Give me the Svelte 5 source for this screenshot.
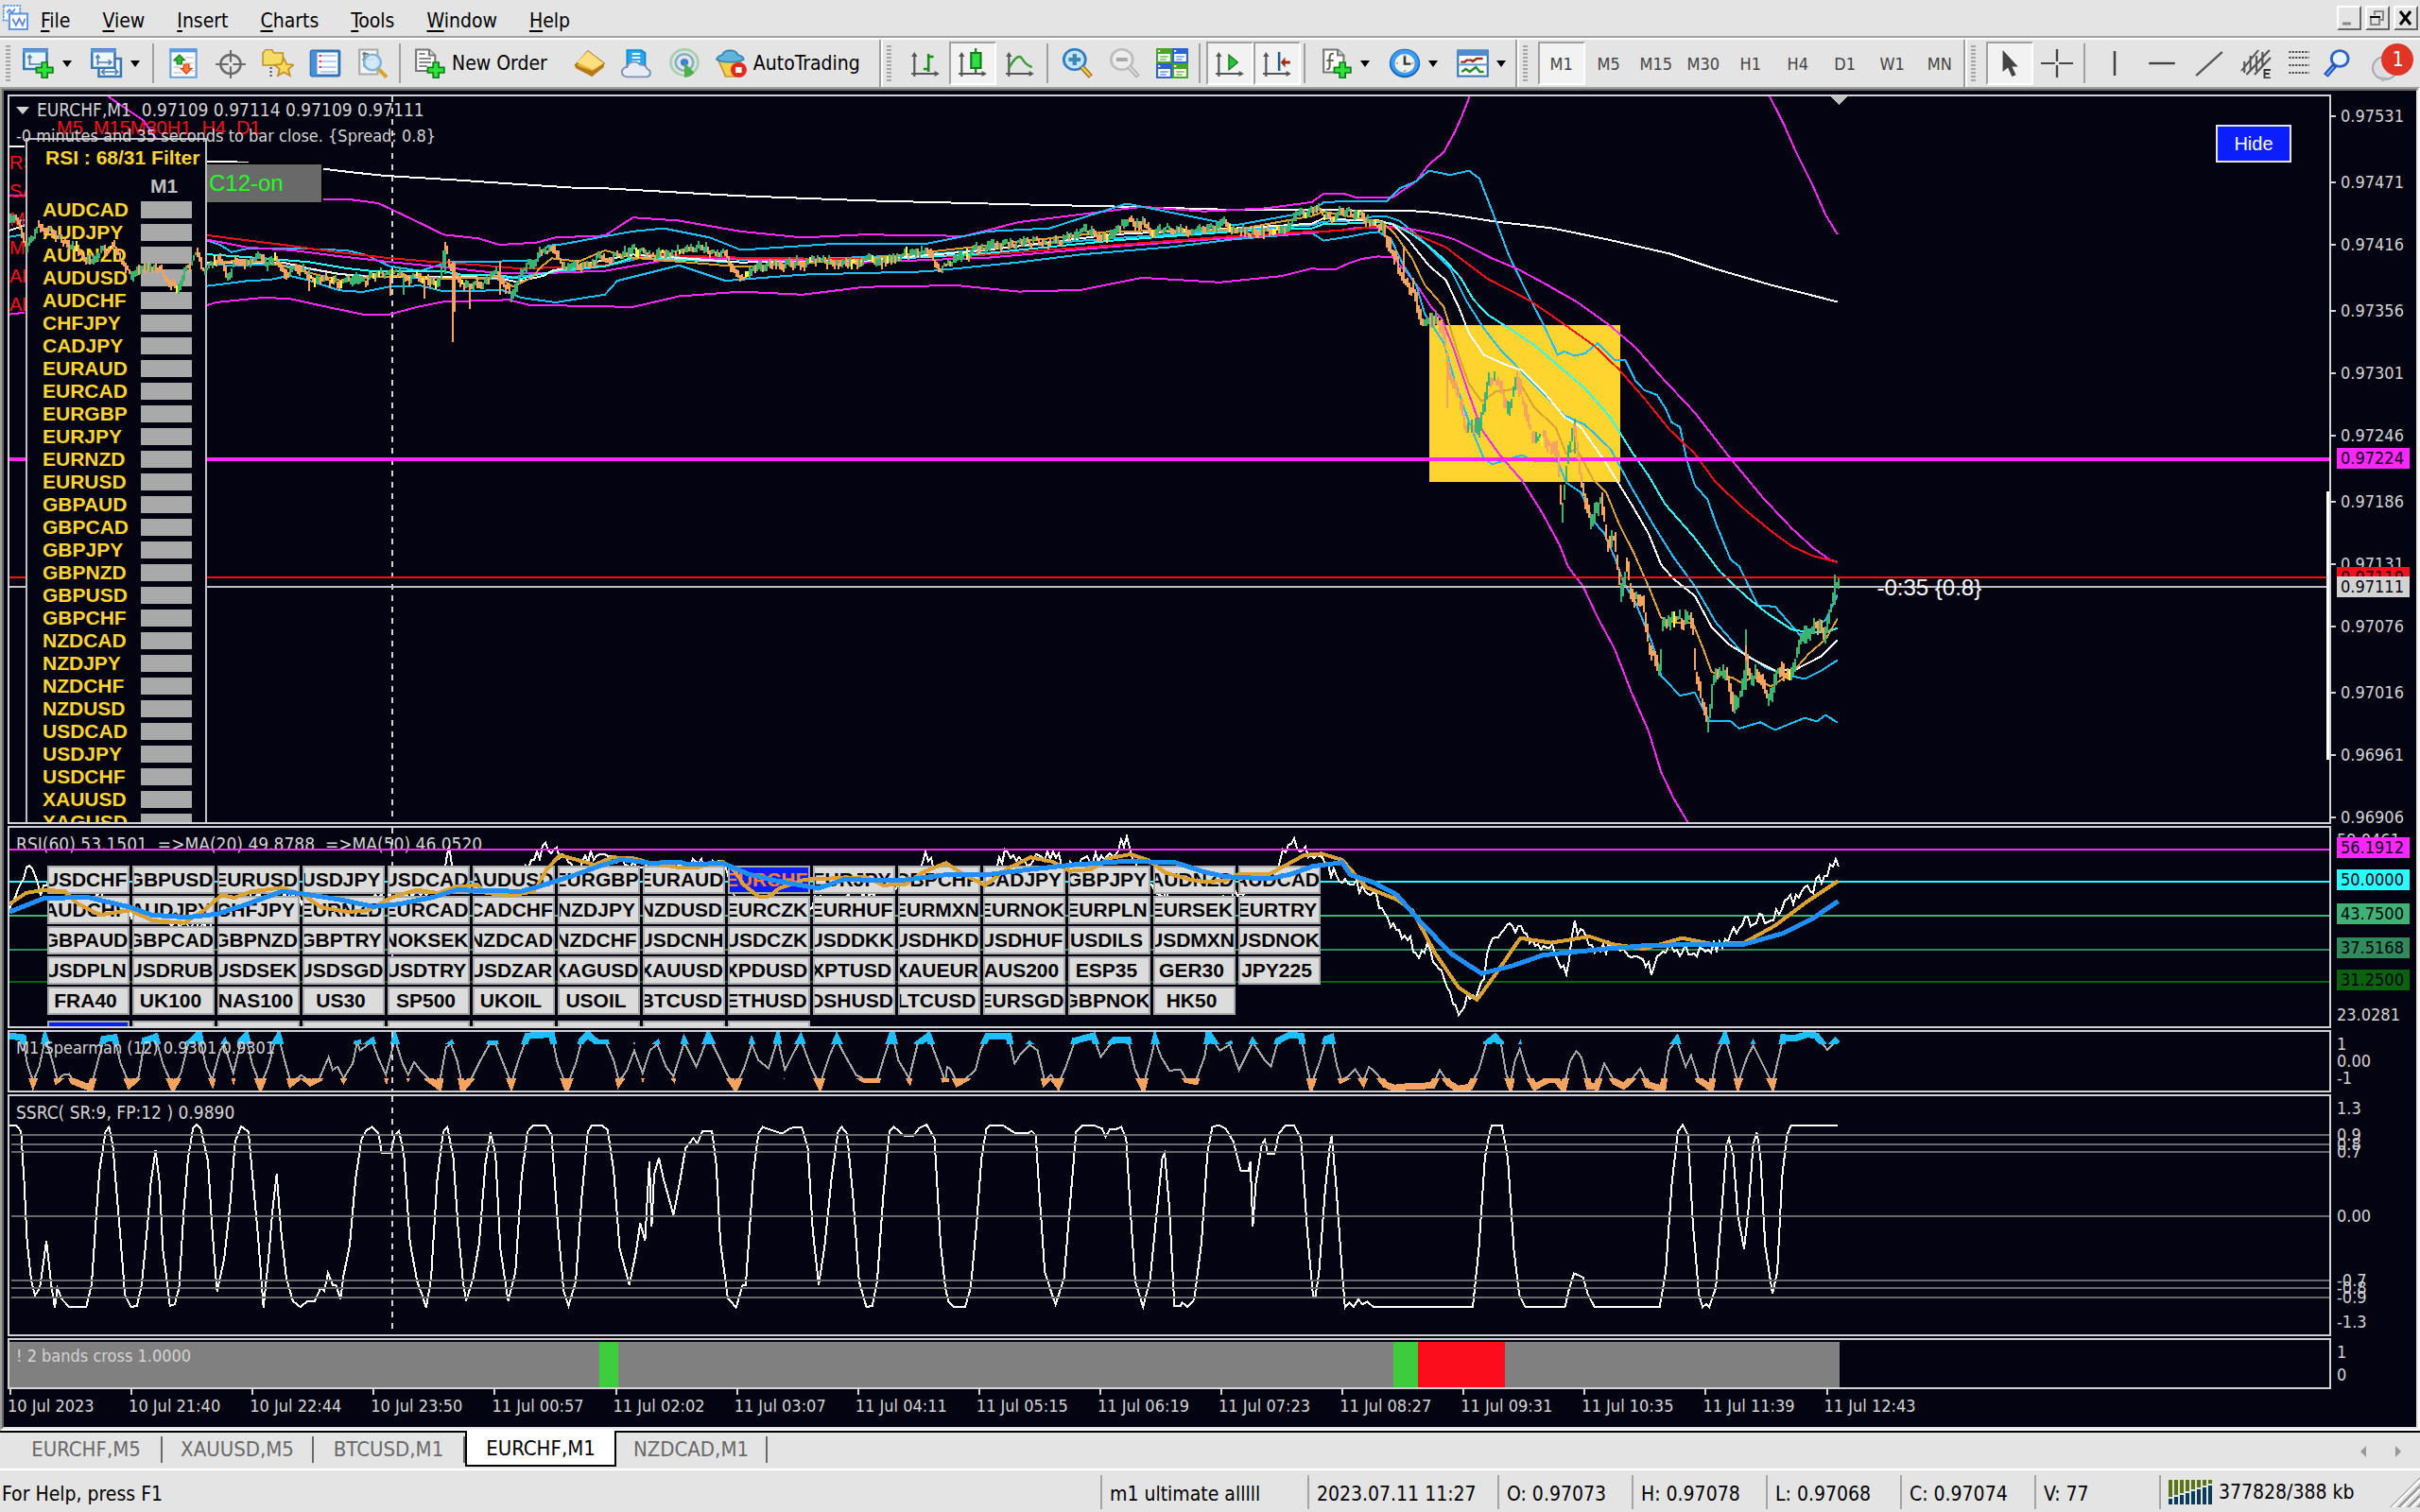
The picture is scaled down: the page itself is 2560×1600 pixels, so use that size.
<script lang="ts">
	type Frame = [number, number, number, number];

	// digitised point frames: origin x, origin y, x units per px, y units per px
	const LEFT: Frame = [0, 90, 2.45, 3];
	const MID: Frame = [0, 0, 0.6125, 0.6125];
	const RIGHT: Frame = [1400, 100, 2.24, 1.96];
	const RSI_A: Frame = [0, 860, 2.178, 3];
	const RSI_B: Frame = [700, 860, 2.178, 3];
	const LOW_A: Frame = [0, 1060, 1.568, 2.904];
	const LOW_B: Frame = [1000, 1060, 1.568, 2.904];

	function join(...parts: [Frame, string][]) {
		return parts
			.map(([f, s]) =>
				s.split(' ').map((p) => {
					const [x, y] = p.split(',').map(Number);
					return `${(f[0] + x / f[2]).toFixed(1)},${(f[1] + y / f[3]).toFixed(1)}`;
				}).join(' ')
			)
			.join(' ');
	}

	const menu = ['File', 'View', 'Insert', 'Charts', 'Tools', 'Window', 'Help'];
	const frames = ['M1', 'M5', 'M15', 'M30', 'H1', 'H4', 'D1', 'W1', 'MN'];
	const tabs = ['EURCHF,M5', 'XAUUSD,M5', 'BTCUSD,M1', 'EURCHF,M1', 'NZDCAD,M1'];
	const times = ['10 Jul 2023', '10 Jul 21:40', '10 Jul 22:44', '10 Jul 23:50', '11 Jul 00:57', '11 Jul 02:02', '11 Jul 03:07', '11 Jul 04:11', '11 Jul 05:15', '11 Jul 06:19', '11 Jul 07:23', '11 Jul 08:27', '11 Jul 09:31', '11 Jul 10:35', '11 Jul 11:39', '11 Jul 12:43'];
	const filterPairs = 'AUDCAD AUDJPY AUDNZD AUDUSD AUDCHF CHFJPY CADJPY EURAUD EURCAD EURGBP EURJPY EURNZD EURUSD GBPAUD GBPCAD GBPJPY GBPNZD GBPUSD GBPCHF NZDCAD NZDJPY NZDCHF NZDUSD USDCAD USDJPY USDCHF XAUUSD XAGUSD'.split(' ');
	const symbols = [
		'USDCHF GBPUSD EURUSD USDJPY USDCAD AUDUSD EURGBP EURAUD EURCHF EURJPY GBPCHF CADJPY GBPJPY AUDNZD AUDCAD',
		'AUDCHF AUDJPY CHFJPY EURNZD EURCAD CADCHF NZDJPY NZDUSD EURCZK EURHUF EURMXN EURNOK EURPLN EURSEK EURTRY',
		'GBPAUD GBPCAD GBPNZD GBPTRY NOKSEK NZDCAD NZDCHF USDCNH USDCZK USDDKK USDHKD USDHUF USDILS USDMXN USDNOK',
		'USDPLN USDRUB USDSEK USDSGD USDTRY USDZAR XAGUSD XAUUSD XPDUSD XPTUSD XAUEUR AUS200 ESP35 GER30 JPY225',
		'FRA40 UK100 NAS100 US30 SP500 UKOIL USOIL BTCUSD ETHUSD DSHUSD LTCUSD EURSGD GBPNOK HK50'
	].map((row) => row.split(' '));

	let activeTab = $state('EURCHF,M1');
	let activeFrame = $state('M1');
	let activeSymbol = $state('EURCHF');

	const lines = [
		{ color: '#ff26ff', pts: join([LEFT, '280,36 320,70 370,110 405,170']) },
		{ color: '#ff26ff', pts: join([LEFT, '24,350 66,350']) },
		{ color: '#ff26ff', pts: join([LEFT, '24,728 64,722']) },
		{ color: '#ffffff', pts: join([LEFT, '24,195 64,195']) },
		{ color: '#ffffff', pts: join([LEFT, '24,462 64,445']) },
		{ color: '#1fbfff', pts: join([LEFT, '24,430 64,430']) },
		{ color: '#1fbfff', pts: join([LEFT, '24,482 64,474']) },
		{ color: '#ffffff', pts: join([LEFT, '534,243 598,243 838,266 920,278 1000,288 1110,296 1190,302 1320,313 1500,327 1568,328'], [MID, '480,127 560,130 640,132 730,134 800,136'], [RIGHT, '15,240 205,241 265,245 345,255 410,264 540,277 670,300 820,330 930,362 1060,395 1150,415 1218,430']) },
		{ color: '#ff26ff', pts: join([LEFT, '760,362 900,362 980,375 1015,395 1080,433 1150,475 1240,487 1295,507 1390,500 1440,484 1568,478'], [MID, '410,141 440,143 480,150 520,154 560,152 625,153 660,144 700,139 740,134 780,137 820,135 850,131'], [RIGHT, '0,206 50,206 75,213 165,213 190,198 220,180 250,145 285,120 310,80 328,45 348,0']) },
		{ color: '#ff26ff', pts: join([RIGHT, '1055,0 1090,60 1120,120 1160,190 1190,250 1218,290']) },
		{ color: '#ff26ff', pts: join([LEFT, '534,700 560,690 680,675 750,678 850,705 940,728 1010,728 1080,705 1150,688 1320,682 1370,698 1568,703'], [MID, '410,199 440,192 480,189 520,191 560,186 620,185 660,189 700,188 740,180 790,183 830,179 850,174'], [RIGHT, '0,363 30,362 60,350 90,341 130,336 165,338 200,372 225,400 255,440 280,465 310,530 340,610 375,695 420,750 470,800 520,870 560,935 580,980 615,1020 650,1085 690,1150 730,1240 770,1320 800,1405 830,1460 865,1512']) },
		{ color: '#1fbfff', pts: join([LEFT, '534,493 570,507 600,530 640,520 800,520 900,525 950,540 1010,575 1090,590 1160,562 1390,558 1420,510 1460,505 1568,480'], [MID, '410,150 430,148 460,154 480,162 540,158 600,158 640,150 680,148 730,132 760,138 800,146 850,137'], [RIGHT, '0,224 50,221 120,221 150,222 180,195 220,180 250,158 300,167 345,158 370,175 390,220 410,265 440,335 490,425 520,475 555,540 570,533 595,542 620,537 650,515 690,550 715,550 740,595 760,613 790,623 810,650 825,680 845,690 860,755 880,810 910,840 930,890 965,965 985,978 1030,1060 1070,1062 1130,1122 1190,1090 1218,1038']) },
		{ color: '#1fbfff', pts: join([LEFT, '534,638 640,622 700,618 750,605 800,620 880,652 940,657 1010,640 1090,637 1150,655 1220,655 1300,650 1350,675 1440,690 1568,665'], [MID, '400,182 440,172 470,182 520,178 600,176 660,170 700,165 760,160 800,155 850,151'], [RIGHT, '0,303 60,295 100,288 130,285 160,300 190,355 220,395 240,455 285,515 310,590 345,680 380,755 400,767 470,748 500,760 555,760 575,805 610,825 640,885 665,910 690,960 710,1010 740,1055 780,1140 800,1205 845,1247 880,1240 900,1275 915,1300 965,1300 985,1315 1035,1302 1070,1318 1140,1293 1170,1300 1190,1287 1218,1303']) },
		{ color: '#1fbfff', pts: join([LEFT, '534,570 620,573 700,568 780,580 880,600 1000,610 1160,612 1300,615 1400,600 1568,575'], [MID, '420,166 500,169 600,165 700,156 800,149 850,146'], [RIGHT, '0,264 60,262 120,253 150,253 180,262 220,290 260,325 300,360 340,430 380,485 420,530 470,575 520,620 570,665 620,685 680,735 730,815 780,890 830,960 880,1020 930,1095 990,1155 1050,1190 1090,1202 1140,1212 1180,1195 1218,1173']) },
		{ color: '#ff26ff', pts: join([LEFT, '534,490 640,515 760,525 870,542 1000,560 1160,580 1290,597 1390,598 1568,590'], [MID, '440,167 480,168 560,170 640,167 720,160 800,154 850,151'], [RIGHT, '0,284 40,282 75,277 160,275 200,278 270,290 310,300 350,318 400,340 460,362 520,390 600,430 680,480 740,525 800,585 880,660 960,750 1040,835 1110,900 1160,940 1200,965 1218,970']) },
		{ color: '#fc0d1b', pts: join([LEFT, '534,476 620,490 740,508 870,530 1000,548 1110,560 1250,572 1350,583 1470,578 1568,572'], [MID, '420,165 480,167 560,168 640,165 720,159 800,153 850,150'], [RIGHT, '0,284 70,280 110,275 160,276 200,283 240,298 290,317 340,350 390,383 440,405 490,428 560,470 640,520 700,570 760,630 820,695 880,745 930,805 1000,862 1060,905 1110,937 1160,957 1218,970']) },
		{ color: '#29ffff', pts: join([LEFT, '534,537 680,550 800,562 900,582 960,590 1150,592 1200,603 1300,605 1350,615 1400,600 1470,585 1568,575'], [MID, '410,167 480,170 560,169 640,164 720,156 800,150 850,148'], [RIGHT, '0,269 80,267 130,264 165,268 210,290 250,315 290,345 325,380 355,425 390,457 440,485 500,520 560,565 620,610 680,670 730,740 770,790 810,850 880,920 940,990 1000,1040 1050,1075 1110,1110 1150,1115 1190,1115 1218,1107']) },
		{ color: '#ffffff', pts: join([LEFT, '534,565 680,565 740,565 800,582 880,600 950,608 1150,608 1290,612 1340,625 1410,605 1430,590 1500,572 1568,555'], [MID, '410,165 480,170 560,169 640,162 720,152 800,148 850,145'], [RIGHT, '0,257 60,260 130,261 165,270 200,300 250,355 290,385 320,440 345,495 380,540 430,560 470,572 520,615 570,668 610,690 670,765 730,850 770,910 800,975 830,1005 880,1040 920,1105 960,1140 1010,1168 1070,1195 1120,1192 1180,1165 1218,1132']) },
		{ color: '#dba132', pts: join([LEFT, '540,568 630,555 700,565 800,595 880,620 960,610 1060,605 1150,615 1290,610 1330,640 1380,610 1400,580 1430,550 1500,560 1568,525'], [MID, '410,167 480,173 560,168 640,159 720,150 800,149 850,140'], [RIGHT, '0,243 140,265 170,290 210,340 240,395 285,440 320,540 345,600 375,637 410,615 450,612 470,605 500,650 550,690 575,745 600,735 640,800 670,825 700,890 735,950 770,1020 800,1085 830,1095 875,1095 900,1150 920,1198 970,1210 990,1220 1020,1208 1060,1228 1110,1200 1150,1160 1190,1130 1218,1087']) }
	];

	const priceKeys = '10,237 18,225 24,240 29,252 41,233 51,238 65,247 75,263 98,272 110,260 122,258 131,277 139,290 147,282 167,278 180,292 188,302 198,273 210,267 216,283 231,272 241,287 249,273 282,280 292,270 306,287 314,287 327,293 347,295 361,301 382,297 390,292 400,297 412,290 433,292 453,293 465,300 471,263 476,280 484,290 490,303 502,300 527,293 535,307 541,315 551,293 563,277 571,263 584,262 598,282 620,272 637,269 670,270 718,267 768,269 776,288 816,281 865,274 914,278 980,269 996,281 1045,261 1094,255 1143,253 1176,245 1195,230 1217,242 1290,245 1355,237 1388,222 1400,222 1427,230 1445,235 1465,243 1471,263 1485,296 1496,304 1505,337 1521,337 1529,360 1534,391 1543,416 1550,452 1565,452 1576,396 1585,400 1596,432 1605,396 1617,447 1625,467 1632,462 1643,472 1649,478 1652,544 1658,478 1666,447 1672,503 1683,549 1695,526 1701,569 1709,569 1715,625 1722,590 1728,630 1739,633 1744,671 1756,707 1759,661 1773,656 1791,656 1795,712 1807,758 1813,717 1829,717 1834,748 1844,727 1847,692 1852,727 1858,712 1872,743 1882,710 1896,710 1904,682 1920,661 1931,666 1941,620 1946,618'
		.split(' ').map((p) => p.split(',').map(Number));

	let seed = 7;
	function rnd() {
		seed = (seed * 16807) % 2147483647;
		return seed / 2147483647;
	}

	function along(keys: number[][], x: number) {
		let i = 1;
		while (i < keys.length - 1 && keys[i][0] < x) i++;
		const [x0, y0] = keys[i - 1];
		const [x1, y1] = keys[i];
		return y0 + ((y1 - y0) * (x - x0)) / (x1 - x0);
	}

	const bars = { up: '', down: '', flat: '' };
	let drift = 0;
	for (let x = 11; x < 1946; x += 2) {
		const step = (rnd() - 0.5) * 7;
		drift = drift * 0.82 + step;
		const y0 = along(priceKeys, x) + drift;
		const slope = along(priceKeys, x + 2) - along(priceKeys, x);
		const reach = x > 1465 ? 9 : 5;
		const high = y0 - 1 - rnd() * reach;
		const low = y0 + 1 + rnd() * reach + Math.abs(slope) / 2;
		const key = rnd() < 0.07 && Math.abs(slope) < 2 ? 'flat' : step + slope * 2 < 0 ? 'up' : 'down';
		bars[key] += `M${x} ${high.toFixed(0)}V${low.toFixed(0)}`;
	}
	bars.down += 'M327 290V308M413 290V313M449 292V316M479 277V362M481 280V330M497 300V327M529 276V312M1531 380V432M1485 262V300';
	bars.up += 'M471 257V290M427 290V312M1847 666V730M1941 608V640M1666 443V480';

	const rsiKeys = '5,590 10,582 15,570 20,560 25,578 40,570 60,575 80,590 110,596 130,600 150,585 180,575 210,590 250,582 280,578 287,572 290,545 295,575 330,572 345,560 352,549 365,553 372,565 385,553 395,558 410,562 430,563 450,560 470,560 478,585 500,592 530,585 560,580 590,572 600,555 610,568 640,572 650,554 665,558 680,553 695,562 710,556 722,552 730,545 738,568 760,585 780,590 800,580 825,572 830,556 838,544 845,550 855,558 866,567 880,575 890,580 900,598 915,612 920,622 925,612 935,635 945,655 950,648 960,640 965,610 975,602 985,603 995,615 1005,612 1015,630 1020,600 1035,615 1050,612 1070,628 1080,615 1100,617 1115,612 1130,598 1150,592 1165,580 1175,575 1190,560'
		.split(' ').map((p) => p.split(',').map((n) => Number(n) * 1.633));
	let rsiRaw = '';
	for (let x = 10; x < 1946; x += 3) rsiRaw += `${x},${(along(rsiKeys, x) + (rnd() - 0.5) * 14).toFixed(0)} `;

	const rsiFast = join(
		[RSI_A, '22,290 60,255 100,245 150,250 180,290 230,325 300,310 350,342 425,350 470,310 510,262 540,270 580,250 650,238 700,262 740,300 800,315 850,310 900,270 960,245 1010,255 1050,235 1100,230 1120,255 1180,262 1230,250 1260,180 1290,135 1330,150 1370,165 1410,142 1460,145 1500,160 1568,175'],
		[RSI_B, '80,175 140,155 165,180 190,230 225,268 250,265 270,240 330,212 400,208 470,205 510,230 560,228 600,190 655,160 700,200 745,230 800,175 850,142 900,155 940,185 990,180 1030,145 1080,132 1120,150 1160,190 1210,210 1250,220 1300,215 1330,195 1400,195 1440,165 1480,135 1520,130 1568,150'],
		[MID, '885,575 905,583 915,590 930,618 945,640 957,648 970,630 985,608 1005,611 1030,607 1045,612 1065,615 1090,608 1110,612 1130,611 1150,600 1170,585 1191,571']
	);
	const rsiSlow = join(
		[RSI_A, '22,315 100,272 200,268 300,300 350,325 430,332 500,322 560,295 650,250 700,258 780,275 860,298 920,290 1000,268 1050,245 1200,250 1240,235 1320,200 1380,170 1430,148 1500,160 1568,157'],
		[RSI_B, '60,165 140,160 200,195 260,215 360,240 420,212 550,215 650,198 760,195 850,180 950,165 1060,155 1180,157 1250,188 1300,203 1400,210 1450,195 1500,170 1568,158'],
		[MID, '875,567 890,572 905,580 920,597 940,618 960,631 980,626 1000,619 1040,615 1065,613 1100,612 1130,612 1155,605 1175,595 1191,584']
	);

	const spearman = join(
		[LOW_A, '15,105 38,110 45,190 55,245 65,200 75,115 85,170 95,240 105,225 115,222 122,245 150,265 160,200 172,115 190,110 200,190 215,255 230,230 240,120 258,108 270,190 287,262 300,220 312,130 330,100 342,200 352,240 365,150 372,130 387,220 400,120 408,105 418,190 432,258 445,200 455,130 462,108 475,200 483,250 500,225 515,250 530,235 545,170 552,210 560,200 570,235 585,190 593,120 597,150 617,122 628,175 640,225 655,115 668,190 677,225 687,185 697,210 710,235 728,260 740,140 748,130 758,180 768,265 782,235 797,180 812,130 822,130 835,190 848,250 862,170 875,105 915,100 925,190 940,262 955,190 965,120 975,100 990,125 1005,125 1018,180 1027,245 1040,210 1052,150 1066,220 1078,150 1090,130 1105,200 1117,230 1135,125 1155,200 1175,105 1190,160 1205,220 1220,262 1235,200 1247,130 1258,180 1275,205 1290,115 1302,210 1328,115 1345,200 1360,255 1375,170 1388,115 1400,160 1420,225 1435,240 1455,240 1470,150 1480,100 1490,180 1508,235 1522,130 1540,105 1555,180 1568,245'],
		[LOW_B, '3,200 8,205 20,250 35,235 50,210 58,150 70,105 105,105 115,190 125,160 140,132 153,150 165,245 175,225 187,255 200,200 215,120 245,105 258,170 270,140 280,118 303,118 315,210 328,260 340,180 348,118 358,170 372,212 390,208 400,240 415,245 430,170 437,100 455,150 472,132 487,210 510,125 530,180 540,200 552,120 570,103 590,105 600,200 607,255 620,190 632,115 640,110 650,200 657,240 668,230 680,208 693,245 703,200 715,220 730,255 745,265 770,260 808,258 820,210 835,250 850,268 870,262 885,210 897,130 912,108 922,130 930,220 937,255 945,180 953,145 965,220 978,262 1000,240 1013,240 1025,265 1037,180 1047,152 1055,170 1068,260 1080,262 1093,190 1110,245 1125,260 1140,235 1153,205 1165,255 1190,268 1200,150 1213,118 1228,200 1237,165 1250,240 1270,265 1280,160 1293,108 1303,170 1315,250 1330,170 1340,135 1355,190 1372,252 1390,110 1410,112 1430,100 1445,105 1463,148 1480,115']
	);

	const ssrc = join(
		[LOW_A, '15,379 27,379 35,400 40,550 45,740 52,860 58,903 66,880 77,735 85,870 91,940 95,880 103,915 115,938 143,938 152,870 160,650 165,520 175,400 181,385 187,440 195,620 203,800 207,900 217,938 227,935 235,870 245,680 250,560 258,456 265,560 270,760 277,860 282,935 290,930 297,880 305,640 312,480 320,390 326,378 333,390 345,490 352,700 360,890 372,790 382,620 390,430 400,383 412,400 420,560 428,720 437,940 446,780 452,640 459,530 466,700 475,850 486,920 498,938 510,920 522,920 532,880 538,890 544,833 552,870 557,870 565,915 570,840 580,750 590,540 600,420 608,395 617,385 628,405 633,465 648,465 655,410 662,398 670,470 680,740 692,860 700,900 707,940 715,850 725,550 735,400 742,385 752,480 760,700 768,860 773,920 785,850 795,740 805,500 814,402 822,470 830,760 843,920 855,830 865,540 875,400 885,379 905,379 915,410 925,680 935,890 943,935 955,860 965,600 975,400 982,379 998,379 1008,395 1018,520 1028,760 1044,870 1055,770 1062,680 1070,735 1077,490 1081,690 1085,530 1093,480 1100,540 1117,655 1127,560 1137,450 1150,420 1157,435 1165,398 1181,398 1188,500 1195,740 1207,910 1221,940 1232,870 1237,870 1250,520 1258,405 1265,385 1280,395 1297,405 1312,388 1330,385 1340,450 1348,700 1358,870 1368,750 1380,530 1390,400 1396,385 1405,405 1415,600 1425,860 1437,938 1447,935 1455,860 1465,600 1475,400 1483,385 1500,412 1515,412 1525,388 1537,378 1550,420 1560,740 1568,880'],
		[LOW_B, '5,920 14,938 33,938 42,880 52,680 60,480 68,390 75,379 95,379 115,403 138,403 143,397 150,410 155,560 165,830 178,905 183,930 197,850 207,620 217,400 228,379 245,379 260,390 266,415 273,392 283,392 292,385 300,420 307,640 315,860 328,938 340,850 350,660 360,480 364,465 372,640 380,935 390,935 393,925 402,938 413,915 425,740 435,460 443,385 453,379 465,390 478,430 490,520 503,520 506,490 510,690 515,560 525,440 530,425 535,468 546,468 553,405 565,379 578,379 590,420 600,700 610,905 614,905 620,830 630,580 638,440 641,412 648,560 657,800 663,940 670,925 677,938 685,915 692,930 700,922 710,938 875,938 885,760 895,480 903,400 907,379 923,379 933,480 943,760 952,900 962,938 1028,938 1035,880 1043,835 1058,847 1066,900 1077,938 1185,938 1195,830 1205,560 1215,400 1223,378 1232,410 1240,680 1250,900 1256,938 1262,930 1267,938 1278,880 1288,640 1296,440 1300,420 1307,470 1315,660 1325,760 1332,640 1340,440 1346,402 1352,470 1360,750 1372,897 1380,830 1388,540 1396,410 1403,379 1480,379']
	);

	type Mark = { y: number; text: string; bg?: string };
	const axes: Record<string, { top: number; height: number; marks: Mark[] }> = {
		price: {
			top: 100, height: 772,
			marks: [
				{ y: 123, text: '0.97531' }, { y: 193, text: '0.97471' }, { y: 259, text: '0.97416' }, { y: 329, text: '0.97356' },
				{ y: 395, text: '0.97301' }, { y: 461, text: '0.97246' }, { y: 531, text: '0.97186' }, { y: 597, text: '0.97131' },
				{ y: 663, text: '0.97076' }, { y: 733, text: '0.97016' }, { y: 799, text: '0.96961' }, { y: 865, text: '0.96906' },
				{ y: 485, text: '0.97224', bg: '#ff26ff' }, { y: 611, text: '0.97119', bg: '#fc0d1b' }, { y: 621, text: '0.97111', bg: '#d3d3d3' }
			]
		},
		rsi: {
			top: 874, height: 214,
			marks: [
				{ y: 889, text: '59.0461' }, { y: 1074, text: '23.0281' },
				{ y: 897, text: '56.1912', bg: '#ff26ff' }, { y: 931, text: '50.0000', bg: '#29ffff' }, { y: 967, text: '43.7500', bg: '#42b174' },
				{ y: 1003, text: '37.5168', bg: '#318a5a' }, { y: 1037, text: '31.2500', bg: '#0b620e' }
			]
		},
		spearman: { top: 1090, height: 66, marks: [{ y: 1105, text: '1' }, { y: 1123, text: '0.00' }, { y: 1141, text: '-1' }] },
		ssrc: {
			top: 1158, height: 256,
			marks: [
				{ y: 1173, text: '1.3' }, { y: 1201, text: '0.9' }, { y: 1211, text: '0.8' }, { y: 1219, text: '0.7' }, { y: 1287, text: '0.00' },
				{ y: 1355, text: '-0.7' }, { y: 1363, text: '-0.8' }, { y: 1373, text: '-0.9' }, { y: 1399, text: '-1.3' }
			]
		},
		bands: { top: 1416, height: 54, marks: [{ y: 1431, text: '1' }, { y: 1455, text: '0' }] }
	};
	const rsiLevels = [[933, '#29ffff'], [969, '#42b174'], [1005, '#318a5a'], [1039, '#0b620e']];
	const ssrcLevels = [1201, 1211, 1219, 1287, 1355, 1363, 1373];

	const plus = '<path d="M9.5 7.5h2.8v2.7H15V13h-2.7v2.7H9.5V13H6.8v-2.8h2.7z" fill="#2fe23a" stroke="#0b7d17" stroke-width=".8"/>';
	const axisArrows = '<path d="M2.5 15V3M1 13.5h13" stroke="#555" stroke-width="1" fill="none"/><path d="M1 4.5 2.5 2 4 4.5zM12.5 12 15 13.5 12.5 15z" fill="#555"/>';
	const icons: Record<string, string> = {
		app: '<rect x="1" y="1" width="10" height="9" fill="#fff" stroke="#5b95e6" stroke-dasharray="1.4 .5"/><rect x="4.500" y="6" width="11" height="9.500" fill="#fff" stroke="#5b95e6" stroke-width="1.2"/><path d="M3 5.500 4.500 3.500 6 5.500 8 3M6.500 9l2 4 2-4 2 4 1.500-4" fill="none" stroke="#5b86e8"/>',
		newChart: '<rect x=".6" y=".6" width="11.400" height="10.400" fill="#e9f2fb" stroke="#3576b5" stroke-width="1.200"/><path d="M0 .3h12.500v2H0z" fill="#5a9ad4"/><path d="M3.500 9V4M2.500 5.200l1-1.400 1 1.400M3 8.500h6" stroke="#4f7fae" fill="none" stroke-width=".8"/>' + plus,
		profiles: '<rect x="4" y="5.500" width="11" height="9.500" fill="#eef5fc" stroke="#3576b5" stroke-width="1.200"/><path d="M5.500 12.500h8M7 11l-1.500 1.500L7 14M12 11l1.500 1.500L12 14" stroke="#4f7fae" fill="none" stroke-width=".8"/><rect x=".6" y=".6" width="11.400" height="9.800" fill="#eef5fc" stroke="#3576b5" stroke-width="1.200"/><path d="M0 .3h12.600v2H0z" fill="#5a9ad4"/><path d="M3.500 9V4M2.500 5.200l1-1.400 1 1.400M3 7.500h7M8.800 6.200l1.400 1.300-1.400 1.300" stroke="#4f7fae" fill="none" stroke-width=".8"/>',
		market: '<rect x="1.600" y=".6" width="12.800" height="14.800" fill="#fff" stroke="#6ba0d8"/><path d="M1.200.2h13.600v2H1.200z" fill="#5b9be0"/><path d="M9 5h4M3 7h2M9 8h4M3 10h3M12 12h1.500M3 13h4" stroke="#c9c9c9" stroke-width=".8"/><path d="M6 3.500 8.700 6.300H7.200v2.200H4.800V6.300H3.300z" fill="#37b637" stroke="#14821c" stroke-width=".6"/><path d="M9.500 13.500 6.700 10.700h1.500V8.500h2.600v2.200h1.500z" fill="#ff7a3c" stroke="#d84312" stroke-width=".6"/>',
		cross: '<circle cx="8" cy="8.500" r="5" fill="none" stroke="#6a6a6a" stroke-width="1.200"/><path d="M8 1v15M.5 8.500h15" stroke="#6a6a6a"/><circle cx="8" cy="8.500" r="1.200" fill="#e4e4e4"/>',
		navigator: '<path d="M.5 2.500 2 .8h3l1 1.700h4.500V9H.5z" fill="#f6dc62" stroke="#b8912a" stroke-width=".7"/><path d="M4.500 10v5" stroke="#555" stroke-dasharray="1 1"/><path d="m11 5.500 1.400 3 3.300.3-2.500 2.300.8 3.400-3-1.800-3 1.800.8-3.400L6.300 8.800l3.300-.3z" fill="#ffd95a" stroke="#c08d1f" stroke-width=".8"/>',
		terminal: '<rect x="1" y="1.500" width="14" height="13" rx=".5" fill="#fff" stroke="#3272b8" stroke-width="1.400"/><path d="M1 1.500h3v13H1z" fill="#4a8fd6"/><path d="M5.500 4h8M5.500 7h8M5.500 10h8M5.500 12.500h8" stroke="#b9cdf3"/><path d="M5 4h1M5 7h1M5 10h1" stroke="#e22"/>',
		tester: '<path d="M1.500.8h9v13h-9z" fill="#f5f5f5" stroke="#aaa"/><path d="M3 3h3M3 6h6M4 2v8" stroke="#777"/><circle cx="8" cy="7.500" r="4.200" fill="#cfe7fa" fill-opacity=".9" stroke="#7fb2dc" stroke-width="1.200"/><path d="m11 11 4 4.300" stroke="#d9a32c" stroke-width="2"/>',
		order: '<path d="M1 .8h6.500l3 3V12H1z" fill="#fff" stroke="#777"/><path d="M7.500.8v3h3" fill="#ddd" stroke="#777"/><path d="M2.500 3h3M2.500 5.500h6M2.500 7.500h6M2.500 9.500h4" stroke="#888"/>' + plus,
		gold: '<path d="M7 1.500 15 8l-6 6.500L.8 9z" fill="#e9b437" stroke="#9a6a12" stroke-width=".8"/><path d="M7 1.500 15 8l-5.500 3.200L1.500 7.500z" fill="#ffdf7e"/><path d="M.8 9l8.500 3L15 8v2l-6 5L.8 10.500z" fill="#b87a18"/>',
		cloud: '<path d="M3 1h7l2 1.500V10H3z" fill="#25a7f5" stroke="#1582cf" stroke-width=".8"/><path d="M5.500 3h4M5.500 5h4M5.500 7h4" stroke="#fff"/><path d="M3 15.200a2.600 2.600 0 0 1 0-5.200 3.600 3.600 0 0 1 6.500-1.200A3.200 3.200 0 0 1 13 11a2.200 2.200 0 0 1 0 4.200z" fill="#e6ebf6" stroke="#7d8fb4" stroke-width=".9"/>',
		signal: '<circle cx="8" cy="7.500" r="6.800" fill="none" stroke="#a9cfae" stroke-width="1.300"/><circle cx="8" cy="7.500" r="4.400" fill="none" stroke="#7cb0c6" stroke-width="1.200"/><circle cx="8" cy="7.500" r="2" fill="#3c7fe0"/><path d="M8 7.500V15.500a8 8 0 0 0 5-2.500z" fill="#4cb04c"/>',
		auto: '<path d="M1.500 6.500h11l-2.500 8.500H5z" fill="#f7cf4b" stroke="#c4962a" stroke-width=".8"/><path d="M.5 6a7.400 3.200 0 0 1 3-2.500C3.700.4 10.500.4 11 3.500A6 3 0 0 1 14 6c-3 1.800-10.500 1.800-13.500 0z" fill="#5fb3dc" stroke="#2f82b0" stroke-width=".8"/><circle cx="11.500" cy="11.500" r="4" fill="#e02a20"/><rect x="10" y="10" width="3" height="3" fill="#fff"/>',
		barChart: axisArrows + '<path d="M9.500 3v9.500M9.500 4.500H12M7 11h2.500" stroke="#1a8a1a" stroke-width="1.200" fill="none"/>',
		candles: axisArrows + '<path d="M9.500 0v13" stroke="#0f7a16"/><rect x="7.200" y="2.500" width="4.800" height="8" fill="#33dd44" stroke="#0f7a16"/>',
		lineChart: axisArrows + '<path d="M2.500 10.500Q7 2 9 5.500T14 10" stroke="#3c9c3c" stroke-width="1.200" fill="none"/>',
		zoomIn: '<circle cx="6.500" cy="6" r="5.400" fill="#c5e4fa" stroke="#2f7cc4" stroke-width="1.300"/><path d="M6.500 3v6M3.500 6h6" stroke="#3f87b4" stroke-width="2"/><path d="m10.200 10 4.300 5" stroke="#a4741b" stroke-width="2.600"/><path d="m10.200 10 4 4.600" stroke="#f4cd55" stroke-width="1.200"/>',
		zoomOut: '<circle cx="6.500" cy="6" r="5.400" fill="#ececec" stroke="#bdbdbd" stroke-width="1.300"/><path d="M3.700 6h5.600" stroke="#a8a8a8" stroke-width="2"/><path d="m10.200 10 4.300 5" stroke="#aaa" stroke-width="2.400"/><path d="m10.200 10 4 4.600" stroke="#ddd"/>',
		tiles: '<path d="M0 0h8v8H0zM8 8h8v8H8z" fill="#49a229"/><path d="M8 0h8v8H8zM0 8h8v8H0z" fill="#2e62cc"/><path d="M1 3h6v4H1zM9 3h6v4H9zM1 11h6v4H1zM9 11h6v4H9z" fill="#fff"/><path d="M2 4.500h4M2 6h3M10 12.500h4M10 14h3" stroke="#8ccf78"/><path d="M10 4.500h4M10 6h3M2 12.500h4M2 14h3" stroke="#8fb0ee"/><path d="M1 1.500h1M9 1.500h1M1 9.500h1M9 9.500h1" stroke="#fff"/>',
		scroll: axisArrows + '<path d="M7.500 3.500v8L12 7.500z" fill="#27c437" stroke="#0f7a16" stroke-width=".6"/>',
		shift: axisArrows + '<path d="M9 2v10" stroke="#1c5f8f" stroke-width="1.200"/><path d="M9.800 7.500 12 4.800v2h2.500v1.400H12v2z" fill="#a12b0c"/>',
		indicator: '<path d="M1.500.8h7l3 3v9h-10z" fill="#fff" stroke="#777"/><path d="M8.500.8v3h3" fill="#ddd" stroke="#777"/><path d="M6.500 3Q4.500 2.500 4.500 5v4.500q0 2-1.500 1.500M3 6.500h3.500" stroke="#665" fill="none"/>' + plus,
		clock: '<circle cx="8" cy="8" r="7.600" fill="#1566b5"/><circle cx="8" cy="7.600" r="6.900" fill="#3b9cf0"/><circle cx="8" cy="8" r="5" fill="#f1f1ec"/><path d="M8 4v4.300h3" stroke="#333" stroke-width="1.200" fill="none"/><path d="M8 3.500v1M8 11.500v1M3.700 8h1M11.500 8h1" stroke="#999" stroke-width=".8"/>',
		template: '<rect x=".6" y="1.200" width="14.800" height="13.600" fill="#fff" stroke="#3576b5"/><path d="M.2 1h15.600v3H.2z" fill="#4d8ed2"/><path d="M.6 8.700h14.800" stroke="#5b95cc"/><path d="M2 7.300h2l1-1h2l1 .7 2-1.500h3" stroke="#9b2f17" fill="none" stroke-width="1.200"/><path d="m2.500 12.500 2-1.500 2 1.500 3-2.500 2 2.500h2" stroke="#288a2e" fill="none" stroke-width="1.200"/>',
		cursor: '<path d="M4.500 1v11.500l2.600-2.200 2 4.700 2-.9-2-4.400h3z" fill="#444"/>',
		crosshair: '<path d="M8 .5V7M8 9v6.500M0 8h7M9 8h7" stroke="#444" stroke-width="1.100"/>',
		vline: '<path d="M8 1.500v13" stroke="#444" stroke-width="1.200"/>',
		hline: '<path d="M1.500 8h13" stroke="#444" stroke-width="1.200"/>',
		trend: '<path d="m1.500 14.500 13-12.500" stroke="#555" stroke-width="1.200"/>',
		channel: '<path d="M.5 12 9 1M3 14 14.500 1M7 14l8-9M2 7v6M5 4v8M8 4v8M11 2v8" stroke="#555" fill="none"/><path d="M15 11.500h-3v4.200h3M12 13.500h2.500" stroke="#333" fill="none" stroke-width=".9"/>',
		fibo: '<path d="M3 2h10M3 5h10M3 9h10M3 13h10" stroke="#444" stroke-dasharray="1 .6"/>',
		search: '<circle cx="9.500" cy="5.500" r="4.200" fill="#e8f2fd" stroke="#2e63c9" stroke-width="1.400"/><path d="M7 9 2.500 14.500" stroke="#1d51ba" stroke-width="2.800"/><path d="M6.500 9.700 3 14" stroke="#6ea1ee"/>'
	};
</script>

{#snippet icon(name: string)}
	<svg class="icon" viewBox="0 0 16 16" preserveAspectRatio="none" aria-hidden="true">{@html icons[name]}</svg>
{/snippet}

{#snippet tool(name: string, label: string, pressed = false)}
	<button class="tool" class:pressed aria-label={label}>{@render icon(name)}</button>
{/snippet}

{#snippet dropTool(name: string, label: string)}
	<button class="tool drop" aria-label={label}>{@render icon(name)}<span class="caret"></span></button>
{/snippet}

{#snippet axis(name: string)}
	<div class="axis">
		{#each axes[name].marks as m}
			<span class="mark" class:boxed={m.bg} class:tick={name === 'price'} style:top="{((m.y - axes[name].top) / axes[name].height) * 100}%" style:background={m.bg}>{m.text}</span>
		{/each}
	</div>
{/snippet}

<div class="app">
	<header class="menubar">
		<span class="logo">{@render icon('app')}</span>
		<nav>
			{#each menu as item}
				<button class="menu-item"><u>{item[0]}</u>{item.slice(1)}</button>
			{/each}
		</nav>
		<div class="win-buttons">
			<button aria-label="Minimize"><svg viewBox="0 0 22 22"><path d="M4 17h9" stroke="#888" stroke-width="3" /></svg></button>
			<button aria-label="Restore"><svg viewBox="0 0 22 22"><path d="M8 8V4h9v9h-4" fill="none" stroke="#888" stroke-width="2" /><path d="M4 10h9v8H4z" fill="#e4e4e4" stroke="#888" stroke-width="2" /><path d="M3 10h11" stroke="#000" stroke-width="2" /></svg></button>
			<button aria-label="Close"><svg viewBox="0 0 22 22"><path d="m5 4 11 14M16 4 5 18" stroke="#000" stroke-width="3" /></svg></button>
		</div>
	</header>

	<div class="toolbar">
		<div class="group first">
			<span class="grip"></span>
			{@render dropTool('newChart', 'New chart')}
			{@render dropTool('profiles', 'Profiles')}
			<span class="sep"></span>
			{@render tool('market', 'Market Watch')}
			{@render tool('cross', 'Data Window')}
			{@render tool('navigator', 'Navigator')}
			{@render tool('terminal', 'Terminal')}
			{@render tool('tester', 'Strategy Tester')}
			<span class="sep"></span>
			<button class="tool wide">{@render icon('order')}New Order</button>
			{@render tool('gold', 'MetaEditor')}
			{@render tool('cloud', 'Market')}
			{@render tool('signal', 'Signals')}
			<button class="tool wide">{@render icon('auto')}AutoTrading</button>
		</div>
		<div class="group">
			<span class="grip"></span>
			{@render tool('barChart', 'Bar Chart')}
			{@render tool('candles', 'Candlesticks', true)}
			{@render tool('lineChart', 'Line Chart')}
			<span class="sep"></span>
			{@render tool('zoomIn', 'Zoom In')}
			{@render tool('zoomOut', 'Zoom Out')}
			{@render tool('tiles', 'Tile Windows')}
			<span class="sep"></span>
			{@render tool('scroll', 'Auto Scroll', true)}
			{@render tool('shift', 'Chart Shift', true)}
			<span class="sep"></span>
			{@render dropTool('indicator', 'Indicators')}
			{@render dropTool('clock', 'Periods')}
			{@render dropTool('template', 'Templates')}
		</div>
		<div class="group">
			<span class="grip"></span>
			{#each frames as f}
				<button class="tool frame" class:pressed={f === activeFrame} onclick={() => (activeFrame = f)}>{f}</button>
			{/each}
		</div>
		<div class="group last">
			<span class="grip"></span>
			{@render tool('cursor', 'Cursor', true)}
			{@render tool('crosshair', 'Crosshair')}
			<span class="sep"></span>
			{@render tool('vline', 'Vertical Line')}
			{@render tool('hline', 'Horizontal Line')}
			{@render tool('trend', 'Trendline')}
			{@render tool('channel', 'Channel')}
			<button class="tool slim" aria-label="Fibonacci">{@render icon('fibo')}</button>
			<span class="push"></span>
			<button class="tool slim" aria-label="Search">{@render icon('search')}</button>
			<button class="tool chat" aria-label="Messages">
				<svg viewBox="0 0 50 44" aria-hidden="true"><ellipse cx="18" cy="27" rx="13" ry="12" fill="#dedee2" stroke="#a8a8b0" stroke-width="2" /><path d="m12 36 3 6 6-5z" fill="#b5b5bb" /><circle cx="31" cy="18" r="17" fill="#df3526" /></svg>
				<span class="count">1</span>
			</button>
		</div>
	</div>

	<main class="mdi">
		<div class="window">
			<section class="pane">
				<svg class="plot" viewBox="10 102 2454 768" preserveAspectRatio="none">
					<rect x="1512" y="344" width="202" height="166" fill="#ffd42e" />
					<path d="M415 102V870" stroke="#d3d3d3" stroke-width="2" stroke-dasharray="6 6" />
					{#each lines as l}
						<polyline points={l.pts} fill="none" stroke={l.color} stroke-width="2" />
					{/each}
					<path d="M10 486H2464" stroke="#ff26ff" stroke-width="4" />
					<path d="M10 611H2464" stroke="#fc0d1b" stroke-width="2" />
					<path d="M10 621H2464" stroke="#c0c0c0" stroke-width="2" />
					<path d="M1936 102h18l-9 9z" fill="#c0c0c0" />
				</svg>
				<div class="red-head">M5&nbsp; M15M30H1&nbsp; H4&nbsp; D1</div>
				<div class="red-side"><span>RS</span><span>SA</span><span>M</span><span>M</span><span>AL</span><span>AL</span></div>
				<button class="c12">C12-on</button>
				<button class="hide">Hide</button>
				<table class="filter">
					<caption>RSI : 68/31 Filter</caption>
					<thead>
						<tr><th></th><th class="col">M1</th></tr>
					</thead>
					<tbody>
						{#each filterPairs as p}
							<tr><th scope="row">{p}</th><td><span class="cell"></span></td></tr>
						{/each}
					</tbody>
				</table>
				<svg class="plot over" viewBox="10 102 2454 768" preserveAspectRatio="none">
					<path d={bars.up} stroke="#3cb371" stroke-width="2" />
					<path d={bars.down} stroke="#f4a460" stroke-width="2" />
					<path d={bars.flat} stroke="#ffff38" stroke-width="2" />
				</svg>
				<div class="countdown">-0:35 &#123;0.8&#125;</div>
				<div class="titles">
					<p class="quote"><span class="tri"></span>EURCHF,M1&nbsp; 0.97109 0.97114 0.97109 0.97111</p>
					<p>-0 minutes and 35 seconds to bar close. &#123;Spread: 0.8&#125;</p>
				</div>
				<span class="range"></span>
			</section>
			{@render axis('price')}

			<section class="pane">
				<svg class="plot" viewBox="10 876 2454 210" preserveAspectRatio="none">
					{#each rsiLevels as [y, color]}
						<path d="M10 {y}H2464" stroke={color} stroke-width="2" />
					{/each}
					<polyline points={rsiRaw} fill="none" stroke="#fff" stroke-width="2" />
					<path d="M415 876V1086" stroke="#d3d3d3" stroke-width="2" stroke-dasharray="6 6" />
				</svg>
				<div class="symbols">
					{#each symbols as row}
						<div class="row">
							{#each row as s}
								<button class="symbol" class:on={s === activeSymbol} onclick={() => (activeSymbol = s)}>{s}</button>
							{/each}
						</div>
					{/each}
					<div class="row periods">
						{#each frames as f}
							<button class="symbol" class:on={f === activeFrame} aria-label={f}></button>
						{/each}
					</div>
				</div>
				<p class="label big">RSI(60) 53.1501&nbsp; =&gt;MA(20) 49.8788&nbsp; =&gt;MA(50) 46.0520</p>
				<svg class="plot over" viewBox="10 876 2454 210" preserveAspectRatio="none">
					<path d="M10 899H2464" stroke="#ff26ff" stroke-width="2" />
					<polyline points={rsiFast} fill="none" stroke="#dba132" stroke-width="4" />
					<polyline points={rsiSlow} fill="none" stroke="#1f8fff" stroke-width="5" />
				</svg>
			</section>
			{@render axis('rsi')}

			<section class="pane">
				<svg class="plot" viewBox="10 1092 2454 62" preserveAspectRatio="none">
					<clipPath id="tops"><rect x="10" y="1092" width="2454" height="13" /></clipPath>
					<clipPath id="bottoms"><rect x="10" y="1141" width="2454" height="13" /></clipPath>
					<polyline points={spearman} fill="none" stroke="#a9a9a9" stroke-width="2" />
					<polyline points={spearman} fill="none" stroke="#1fbfff" stroke-width="7" clip-path="url(#tops)" />
					<polyline points={spearman} fill="none" stroke="#f4a460" stroke-width="7" clip-path="url(#bottoms)" />
					<path d="M415 1092V1154" stroke="#d3d3d3" stroke-width="2" stroke-dasharray="6 6" />
				</svg>
				<p class="label">M1 Spearman (12) 0.9301 0.9301</p>
			</section>
			{@render axis('spearman')}

			<section class="pane">
				<svg class="plot" viewBox="10 1160 2454 252" preserveAspectRatio="none">
					<polyline points={ssrc} fill="none" stroke="#fff" stroke-width="2" />
					{#each ssrcLevels as y}
						<path d="M12 {y}H2464" stroke="#696969" stroke-width="2" />
					{/each}
					<path d="M415 1160V1412" stroke="#d3d3d3" stroke-width="2" stroke-dasharray="6 6" />
				</svg>
				<p class="label big">SSRC( SR:9, FP:12 ) 0.9890</p>
			</section>
			{@render axis('ssrc')}

			<section class="pane">
				<svg class="plot" viewBox="10 1418 2454 50" preserveAspectRatio="none">
					<path d="M10 1420H1946V1468H10z" fill="#808080" />
					<path d="M634 1420h20v48h-20zM1474 1420h26v48h-26z" fill="#3ccc3c" />
					<path d="M1500 1420h92v48h-92z" fill="#fc0d1b" />
				</svg>
				<p class="label">! 2 bands cross 1.0000</p>
			</section>
			{@render axis('bands')}

			<ol class="times">
				{#each times as t}
					<li>{t}</li>
				{/each}
			</ol>
		</div>
	</main>

	<div class="tabs" role="tablist">
		{#each tabs as t}
			<button class="tab" class:active={t === activeTab} role="tab" aria-selected={t === activeTab} onclick={() => (activeTab = t)}>{t}</button>
		{/each}
		<span class="push"></span>
		<button class="arrow" aria-label="Scroll left"><svg viewBox="0 0 8 12"><path d="M7 0v12L1 6z" fill="#999" /></svg></button>
		<button class="arrow" aria-label="Scroll right"><svg viewBox="0 0 8 12"><path d="M1 0v12l6-6z" fill="#999" /></svg></button>
	</div>

	<footer class="status">
		<span class="help">For Help, press F1</span>
		<span class="w219">m1 ultimate alllll</span>
		<span class="w201">2023.07.11 11:27</span>
		<span class="w142">O: 0.97073</span>
		<span class="w142">H: 0.97078</span>
		<span class="w142">L: 0.97068</span>
		<span class="w142">C: 0.97074</span>
		<span class="w132">V: 77</span>
		<span class="net">
			<svg viewBox="0 0 46 26" aria-hidden="true">
				{#each [0, 1, 2, 3, 4, 5, 6, 7] as i}
					<rect x={i * 6} y="0" width="4" height={18 - i * 2} fill="#5a7418" />
					<rect x={i * 6} y={20 - i * 2} width="4" height={6 + i * 2} fill="#083c58" />
				{/each}
			</svg>
			377828/388 kb
			<i class="corner"></i>
		</span>
	</footer>
</div>

<style>
	:global(body) {
		margin: 0;
		background: #e4e4e4;
	}

	.app {
		min-height: 100vh;
		display: flex;
		flex-direction: column;
		background: #e4e4e4;
		color: #000;
		font-family: "DejaVu Sans Condensed", "DejaVu Sans", sans-serif;
		font-size: 21px;
	}

	button {
		font: inherit;
		color: inherit;
		background: none;
		border: 0;
		padding: 0;
		margin: 0;
	}

	p {
		margin: 0;
	}

	.push {
		flex: 1;
	}

	.menubar {
		display: flex;
		align-items: center;
		height: 38px;
		border-bottom: 2px solid #a0a0a0;
	}

	.logo {
		width: 24px;
		display: flex;
		padding: 0 0 2px 2px;
	}

	.menubar nav {
		display: flex;
		flex: 1;
		padding-top: 6px;
	}

	.menu-item {
		padding: 0 17px;
		line-height: 28px;
	}

	.menu-item u {
		text-underline-offset: 3px;
		text-decoration-thickness: 2px;
	}

	.win-buttons {
		display: flex;
		gap: 4px;
		padding-right: 2px;
	}

	.win-buttons button {
		width: 26px;
		height: 26px;
		box-sizing: border-box;
		border: 2px solid;
		border-color: #fff #666 #666 #fff;
	}

	.win-buttons svg {
		display: block;
		width: 22px;
		height: 22px;
	}

	.icon {
		width: 34px;
		height: 32px;
		display: block;
		flex: none;
	}

	.logo .icon {
		width: 28px;
		height: 28px;
	}

	.toolbar {
		display: flex;
		height: 50px;
		border-top: 2px solid #fff;
	}

	.group {
		display: flex;
		flex: none;
		align-items: center;
		border-right: 2px solid #a0a0a0;
		box-shadow: 2px 0 #fff;
		padding-left: 6px;
	}

	.group.last {
		flex: 1;
		border-right: 0;
		box-shadow: none;
	}

	.grip {
		width: 5px;
		height: 38px;
		margin-right: 11px;
		background: repeating-linear-gradient(#a5a5a5 0 2px, transparent 2px 4px);
	}

	.first .grip {
		margin-right: 3px;
	}

	.sep {
		width: 2px;
		height: 42px;
		margin: 0 6px 0 3px;
		background: #a0a0a0;
	}

	.tool {
		flex: none;
		width: 50px;
		height: 46px;
		box-sizing: border-box;
		display: flex;
		align-items: center;
		justify-content: center;
		border: 2px solid transparent;
		white-space: nowrap;
	}

	.tool.drop {
		width: 72px;
		gap: 8px;
	}

	.tool.slim {
		width: 40px;
	}

	.tool.wide {
		width: auto;
		gap: 6px;
		padding: 0 18px 0 6px;
	}

	.tool.frame {
		font-size: 18px;
		color: #444;
	}

	.tool.pressed {
		background: #f2f2f2;
		border-color: #a0a0a0 #fff #fff #a0a0a0;
	}

	.caret {
		border: 5px solid transparent;
		border-top: 7px solid #000;
		border-bottom: 0;
	}

	.tool.chat {
		position: relative;
		width: 56px;
		margin: 0 6px 0 10px;
	}

	.chat svg {
		width: 50px;
		height: 44px;
	}

	.count {
		position: absolute;
		left: 27px;
		top: 5px;
		color: #fff;
	}

	.mdi {
		flex: 1;
		display: flex;
		border-top: 2px solid #a0a0a0;
		border-left: 2px solid #a0a0a0;
		border-right: 2px solid #fff;
		border-bottom: 2px solid #fff;
	}

	.window {
		flex: 1;
		display: grid;
		grid-template-columns: 1fr 90px;
		grid-template-rows: 772fr 214fr 66fr 256fr 54fr 38fr;
		row-gap: 2px;
		padding: 4px 0 0 4px;
		background: #030312;
		border: 2px solid #696969;
		border-right-color: #e4e4e4;
		border-bottom-color: #e4e4e4;
		color: #d3d3d3;
		font-size: 18px;
		line-height: 22px;
	}

	.pane {
		position: relative;
		min-height: 0;
		overflow: hidden;
		border: 2px solid #d3d3d3;
	}

	.plot {
		position: absolute;
		inset: 0;
		width: 100%;
		height: 100%;
		shape-rendering: crispEdges;
	}

	.plot.over {
		pointer-events: none;
	}

	.titles {
		position: absolute;
		left: 7px;
		top: 1px;
		line-height: 27px;
		white-space: nowrap;
	}

	.quote,
	.label.big {
		font-size: 19px;
	}

	.tri {
		display: inline-block;
		margin-right: 8px;
		border: 7px solid transparent;
		border-top: 8px solid #d3d3d3;
		border-bottom: 0;
		vertical-align: 2px;
	}

	.label {
		position: absolute;
		left: 7px;
		top: 6px;
		white-space: nowrap;
	}

	.red-head,
	.red-side {
		position: absolute;
		color: #fc0d1b;
		font-family: "Liberation Sans", sans-serif;
		font-size: 20px;
		white-space: nowrap;
	}

	.red-head {
		left: 50px;
		top: 22px;
	}

	.red-side {
		left: 0;
		top: 55px;
		line-height: 30px;
		width: 18px;
		overflow: hidden;
		display: grid;
	}

	.c12 {
		position: absolute;
		left: 206px;
		top: 70px;
		width: 126px;
		height: 44px;
		border: 2px solid #000;
		background: #696969;
		color: #22ff22;
		font-family: "Liberation Sans", sans-serif;
		font-size: 24px;
		text-align: left;
		padding-left: 3px;
	}

	.hide {
		position: absolute;
		right: 40px;
		top: 30px;
		width: 80px;
		height: 40px;
		background: #0a1eff;
		border: 2px solid #e4e4e4;
		color: #fff;
		font-family: "Liberation Sans", sans-serif;
		font-size: 20px;
	}

	.filter {
		position: absolute;
		left: 17px;
		top: 44px;
		width: 192px;
		border: 2px solid #c0c0c0;
		background: #030312;
		border-collapse: separate;
		border-spacing: 0;
		box-sizing: border-box;
		font-family: "Liberation Sans", sans-serif;
		font-size: 21px;
		font-weight: bold;
		color: #ffd42e;
	}

	.filter caption {
		line-height: 38px;
		margin-bottom: -40px;
		padding: 2px 0 0 21px;
		text-align: left;
		white-space: nowrap;
	}

	.filter thead th {
		padding-top: 37px;
		padding-bottom: 1px;
	}

	.filter th,
	.filter td {
		height: 24px;
		padding: 0;
		line-height: 24px;
		text-align: left;
	}

	.filter th {
		padding-left: 16px;
	}

	.filter .col {
		color: #c0c0c0;
		padding-left: 10px;
	}

	.filter td {
		width: 68px;
	}

	.cell {
		display: block;
		width: 54px;
		height: 18px;
		background: #a9a9a9;
	}

	.countdown {
		position: absolute;
		left: 80.5%;
		top: 67.7%;
		transform: translateY(-50%);
		color: #fff;
		font-family: "Liberation Sans", sans-serif;
		font-size: 24px;
	}

	.range {
		position: absolute;
		right: 0;
		top: 54.4%;
		height: 37%;
		width: 3px;
		background: #fff;
	}

	.axis {
		position: relative;
	}

	.mark {
		position: absolute;
		left: 6px;
		transform: translateY(-50%);
		white-space: nowrap;
	}

	.tick,
	.boxed {
		padding: 0 6px 0 4px;
	}

	.boxed {
		color: #030312;
	}

	.tick:not(.boxed)::before {
		content: "";
		position: absolute;
		left: -6px;
		top: 10px;
		width: 5px;
		height: 2px;
		background: #d3d3d3;
	}

	.symbols {
		position: absolute;
		top: 40px;
		left: 40px;
		display: grid;
		gap: 2px;
		font-family: "Liberation Sans", sans-serif;
		font-size: 21px;
		font-weight: bold;
		color: #000;
	}

	.row {
		display: flex;
		gap: 3px;
	}

	.periods {
		padding-top: 4px;
	}

	.symbol {
		width: 87px;
		height: 30px;
		box-sizing: border-box;
		display: flex;
		align-items: center;
		justify-content: center;
		padding-right: 6px;
		overflow: hidden;
		background: #dcdcdc;
		border: 2px solid #a9a9a9;
	}

	.symbol.on {
		background: #0a1eff;
		color: #ff7f27;
	}

	.times {
		display: grid;
		grid-template-columns: repeat(16, 128fr) 406fr;
		margin: -2px 0 0 2px;
		padding: 0;
		list-style: none;
		text-indent: -2px;
		white-space: nowrap;
	}

	.times li {
		position: relative;
		padding-top: 7px;
	}

	.times li::before {
		content: "";
		position: absolute;
		left: 0;
		top: 0;
		width: 2px;
		height: 6px;
		background: #d3d3d3;
	}

	.tabs {
		display: flex;
		height: 38px;
		padding-left: 12px;
		border-top: 2px solid #000;
		border-bottom: 2px solid #fff;
		color: #696969;
	}

	.tab {
		width: 160px;
		height: 28px;
		margin-top: 4px;
		border-right: 2px solid #696969;
		font-size: 22px;
		line-height: 28px;
	}

	.tab.active {
		height: 38px;
		margin-top: -2px;
		padding-top: 2px;
		background: #fff;
		color: #000;
		border: 2px solid #000;
		border-top: 0;
	}

	.arrow {
		width: 37px;
	}

	.arrow:last-child {
		margin-right: 5px;
	}

	.arrow svg {
		width: 8px;
		height: 12px;
	}

	.status {
		display: flex;
		align-items: center;
		height: 44px;
		padding-top: 2px;
		box-sizing: border-box;
		white-space: nowrap;
	}

	.status > span {
		box-sizing: border-box;
		height: 36px;
		line-height: 40px;
		padding-left: 8px;
		border-left: 2px solid #a5a5a5;
	}

	.status > .help {
		flex: 1;
		padding-left: 2px;
		border: 0;
	}

	.w219 {
		width: 219px;
	}

	.w201 {
		width: 201px;
	}

	.w142 {
		width: 142px;
	}

	.w132 {
		width: 132px;
	}

	.net {
		width: 276px;
		display: flex;
		align-items: center;
		gap: 7px;
	}

	.net svg {
		width: 46px;
		height: 26px;
	}

	.corner {
		width: 32px;
		height: 32px;
		margin-left: auto;
		clip-path: polygon(100% 0, 100% 100%, 0 100%);
		background: repeating-linear-gradient(135deg, #a0a0a0 0 3px, #fff 3px 5px, #e4e4e4 5px 7px);
	}
</style>
